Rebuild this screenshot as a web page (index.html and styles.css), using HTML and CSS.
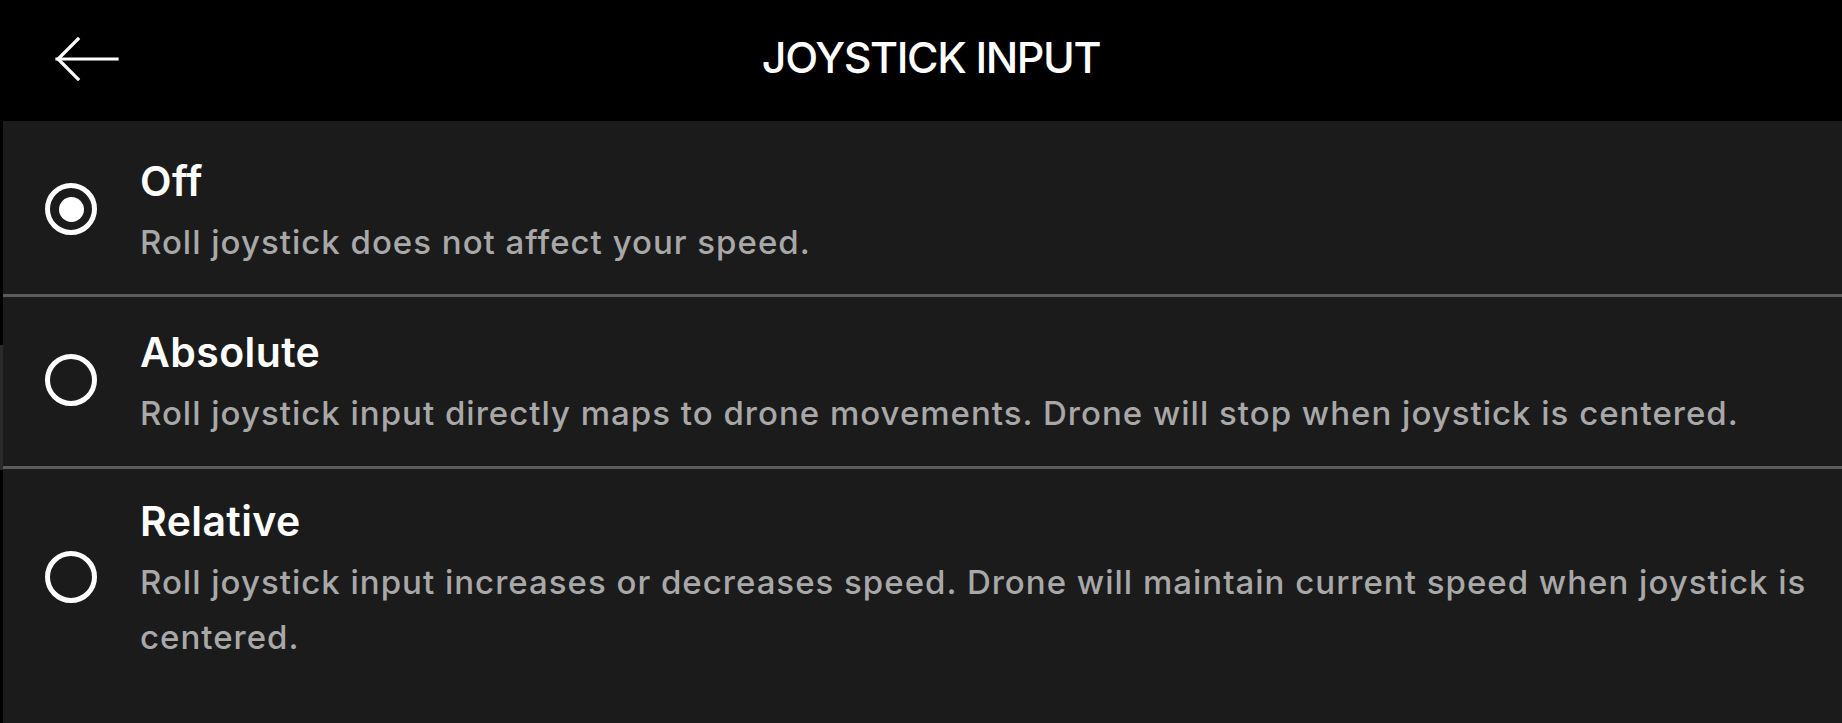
FILE: index.html
```html
<!DOCTYPE html>
<html lang="en">
<head>
<meta charset="utf-8">
<title>Joystick Input</title>
<link rel="stylesheet" href="styles.css">
</head>
<body>
<div class="screen">
  <header class="topbar">
    <button class="back" aria-label="Back">
      <svg width="66" height="44" viewBox="0 0 66 44" fill="none" stroke="#fff" stroke-width="3.2" stroke-linecap="square">
        <path d="M2 22 H62"/>
        <path d="M23 2 L3 22 L23 42"/>
      </svg>
    </button>
    <h1 class="title">JOYSTICK INPUT</h1>
    <span class="spacer"></span>
  </header>
  <main class="list">
    <div class="row">
      <span class="radio radio--on"></span>
      <div class="text">
        <div class="label">Off</div>
        <div class="desc">Roll joystick does not affect your speed.</div>
      </div>
    </div>
    <div class="row">
      <span class="radio"></span>
      <div class="text">
        <div class="label">Absolute</div>
        <div class="desc">Roll joystick input directly maps to drone movements. Drone will stop when joystick is centered.</div>
      </div>
    </div>
    <div class="row">
      <span class="radio"></span>
      <div class="text">
        <div class="label">Relative</div>
        <div class="desc">Roll joystick input increases or decreases speed. Drone will maintain current speed when joystick is centered.</div>
      </div>
    </div>
  </main>
</div>
</body>
</html>
```

FILE: styles.css
```css
* { box-sizing: border-box; }
html, body {
  margin: 0;
  padding: 0;
  height: 100%;
  background: #000;
  overflow: hidden;
}
body {
  font-family: Inter, "Noto Sans", sans-serif;
  color: #fff;
}
.screen {
  display: flex;
  flex-direction: column;
  height: 100%;
  background: linear-gradient(to bottom, #000 0, #000 345px, #2a2a2a 345px, #2a2a2a 470px, #000 470px);
}
.topbar {
  height: 121px;
  flex: none;
  display: grid;
  grid-template-columns: 1fr auto 1fr;
  align-items: center;
  background: #000;
  padding-left: 20px;
}
.back {
  justify-self: start;
  background: none;
  border: 0;
  padding: 0;
  margin: -4px 0 0 35px;
  display: flex;
  cursor: pointer;
}
.title {
  margin: -6px 0 0;
  font-size: 43px;
  font-weight: 500;
  letter-spacing: -1.4px;
  line-height: 1;
}
.list {
  flex: 1;
  margin-left: 3px;
  background: #1b1b1b;
}
.row {
  display: flex;
  align-items: center;
  padding: 22px 0 25px 42px;
  border-bottom: 3px solid #5b5b5b;
}
.row:first-child { padding-top: 27px; padding-bottom: 24px; }
.row:last-child { padding-top: 19px; border-bottom: 0; }
.radio {
  flex: none;
  width: 52px;
  height: 52px;
  border: 5px solid #fff;
  border-radius: 50%;
  display: flex;
  align-items: center;
  justify-content: center;
  margin-right: 43px;
}
.radio--on::after {
  content: "";
  width: 25px;
  height: 25px;
  border-radius: 50%;
  background: #fff;
}
.text {
  flex: 1;
  padding-right: 20px;
}
.label {
  font-size: 41px;
  font-weight: 600;
  line-height: 67px;
  letter-spacing: 0.4px;
  color: #fff;
}
.desc {
  font-size: 33px;
  font-weight: 500;
  line-height: 55px;
  letter-spacing: 1px;
  color: #a8a8a8;
}
```
